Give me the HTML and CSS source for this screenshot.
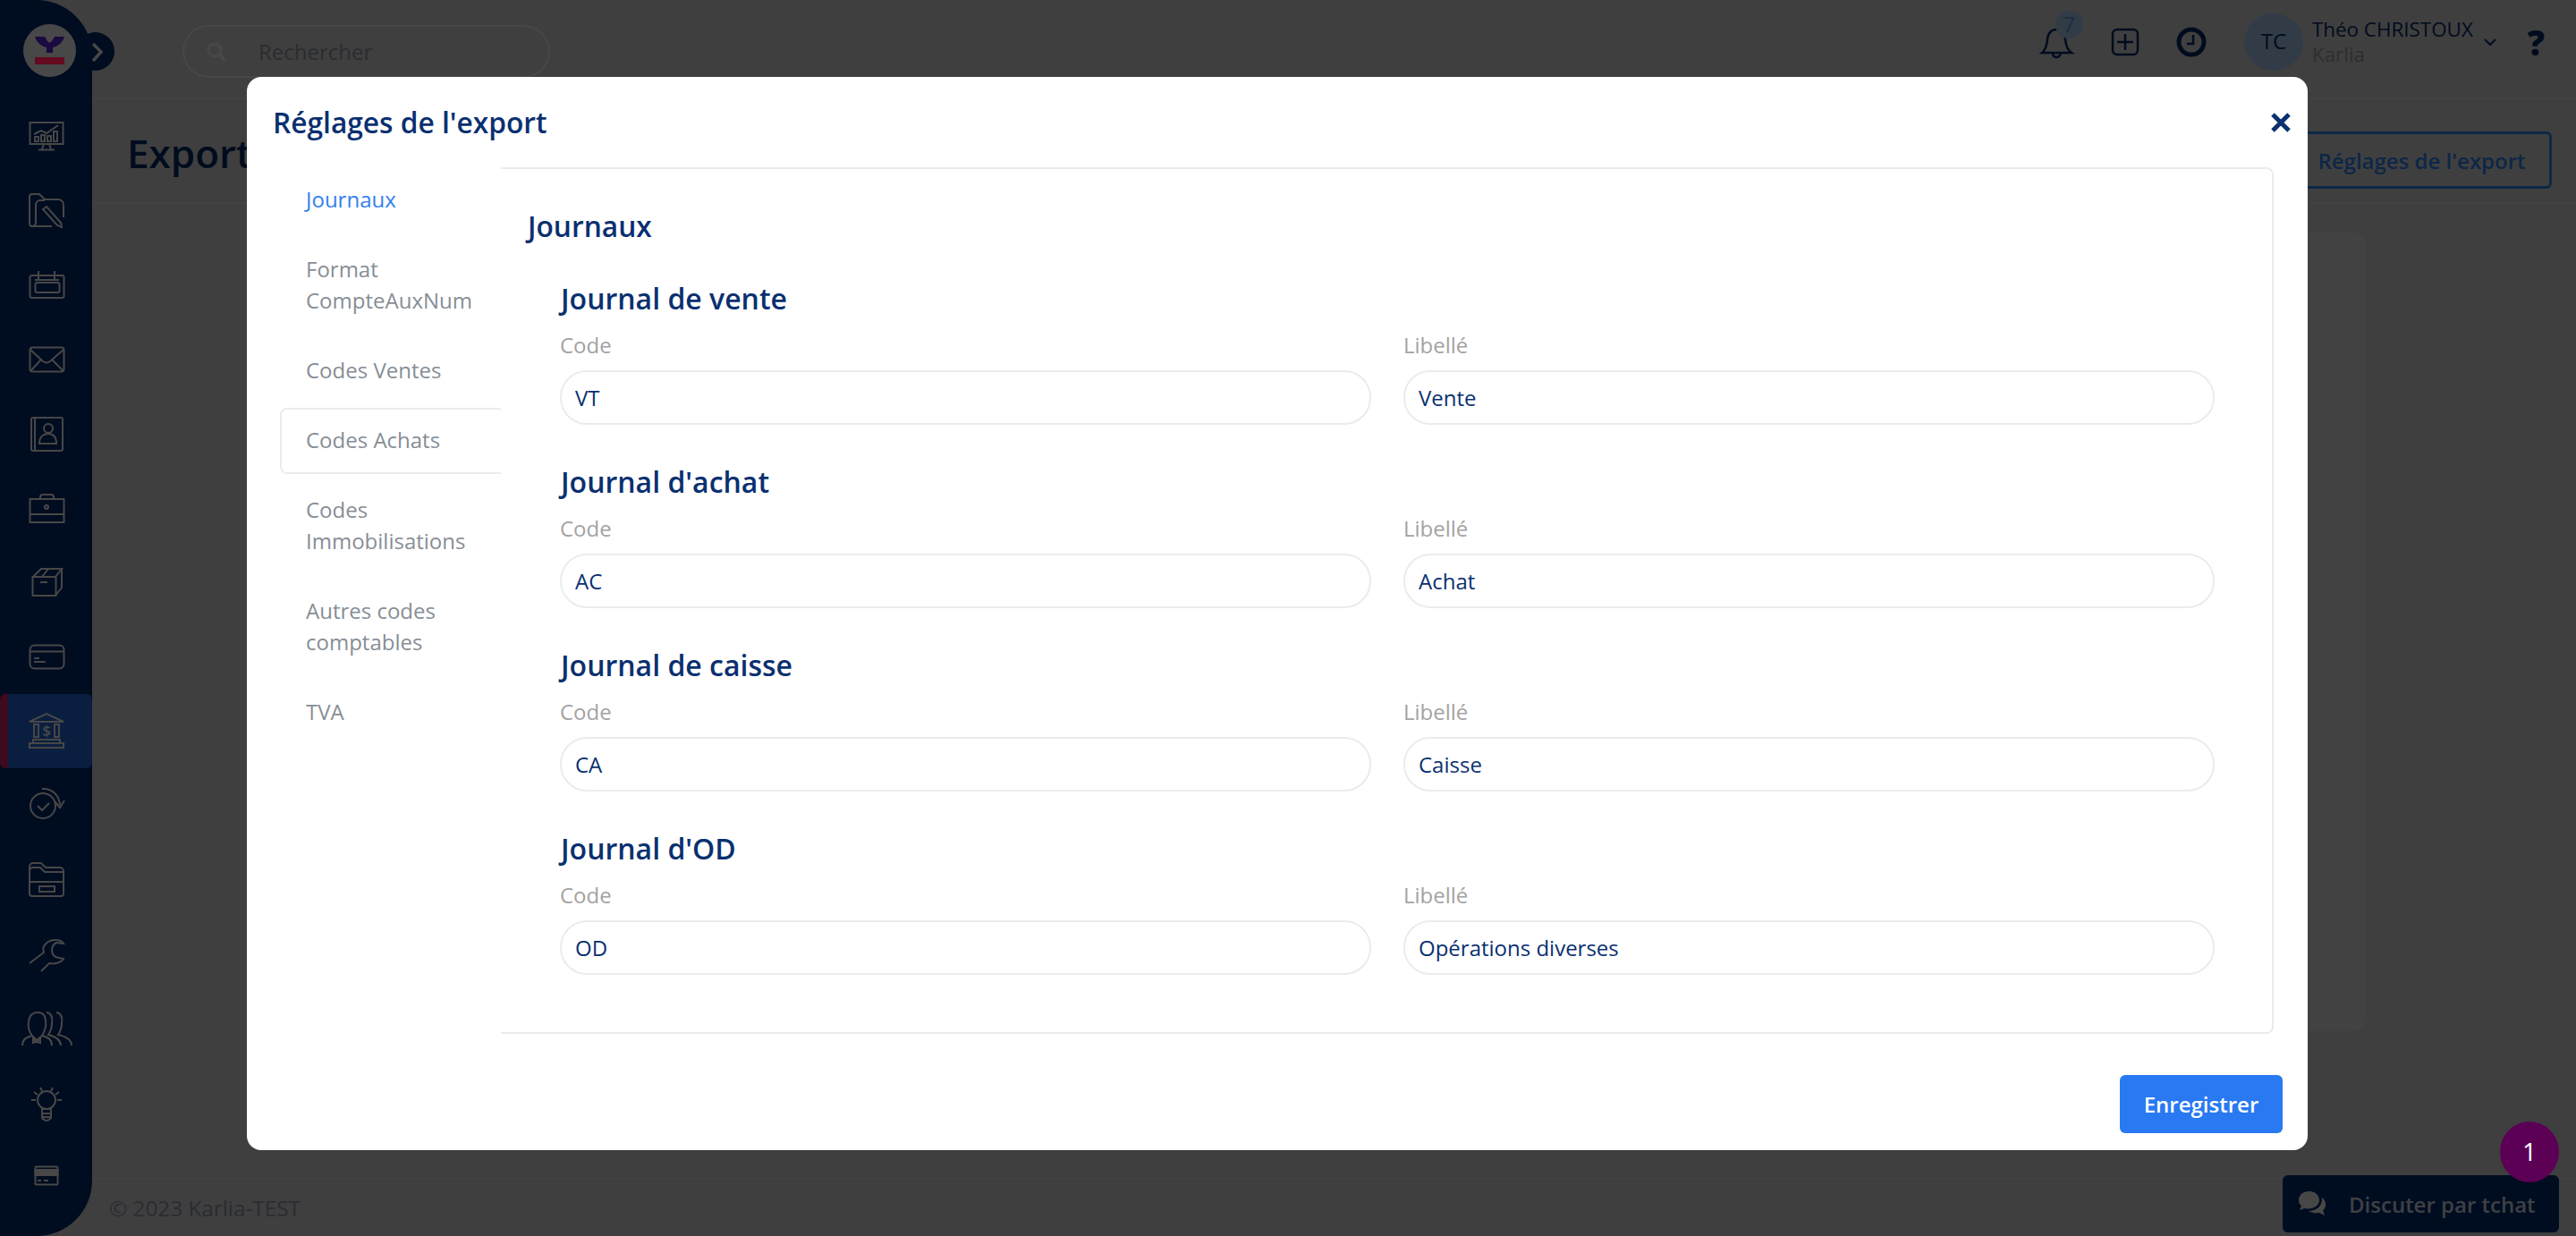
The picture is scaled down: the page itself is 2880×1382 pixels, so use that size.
FILE: index.html
```html
<!DOCTYPE html>
<html lang="fr">
<head>
    <meta charset="UTF-8">
    <meta name="viewport" content="width=device-width, initial-scale=1.0">
    <title>Exports</title>
    <link rel="stylesheet" href="styles.css">
</head>
<body>
    <div class="app">
        <!-- sidebar -->
        <aside class="sidebar">
            <div class="logo">
                <svg class="logo-mark" viewBox="0 0 59 59" width="59" height="59">
                    <circle cx="29.5" cy="29.5" r="29.5" fill="#484848"/>
                    <path d="M13 14 L24 14 C26 18 28 20 29.5 21 C31 20 33 18 35 14 L46 14 C44 21 38 25 33 26 L33 32 L26 32 L26 26 C21 25 15 21 13 14 Z" fill="#1a0a3f"/>
                    <rect x="13" y="37" width="33" height="8" fill="#64091f"/>
                </svg>
            </div>
            <button class="toggle">
                <svg viewBox="0 0 43 43" width="43" height="43"><path d="M19 13 L28 22 L19 32" fill="none" stroke="#fff" stroke-width="3.5"/></svg>
            </button>
            <ul class="menu">
                <li><svg class="ico" viewBox="0 0 60 60"><rect x="11.5" y="15" width="37" height="24"/><path d="M27 39 L25 45 M33 39 L35 45 M21 45.500 H39 M16 28 L24 24 L30 27 L43 18"/><rect x="17" y="31" width="4" height="5"/><rect x="24" y="29" width="4" height="7"/><rect x="31" y="30" width="4" height="6"/><rect x="38" y="25" width="4" height="11"/></svg></li>
                <li><svg class="ico" viewBox="0 0 60 60"><path d="M18 48 H14 a3 3 0 0 1 -3 -3 V15 a3 3 0 0 1 3 -3 H22 l6 6 H43 a6 6 0 0 1 6 6 V38 M14 48 a4 4 0 0 0 4 -4 V24 a5 5 0 0 1 5 -5 H28 M18 48 H36"/><path d="M26 29 L30 26 L46 44 L47 49 L42 47 Z"/></svg></li>
                <li><svg class="ico" viewBox="0 0 60 60"><rect x="11.500" y="20" width="38" height="25" rx="2"/><rect x="17.500" y="28" width="27" height="11" rx="2"/><path d="M21 15 V25 M39 15 V25 M17 25 H44"/></svg></li>
                <li><svg class="ico" viewBox="0 0 60 60"><rect x="11.500" y="17.500" width="38" height="27" rx="3"/><path d="M12 20 L26 33 Q30 36 34 33 L49 20 M12 44 L24 31 M49 44 L36 31"/></svg></li>
                <li><svg class="ico" viewBox="0 0 60 60"><rect x="13" y="12" width="35" height="37" rx="2"/><path d="M17 12 V49 M22 41 C22 34 26 30 32 30 C38 30 41 34 41 41 Z"/><circle cx="32" cy="24" r="5"/></svg></li>
                <li><svg class="ico" viewBox="0 0 60 60"><rect x="11.500" y="20" width="38" height="26"/><path d="M23 20 V18 Q23 15 26 15 H35 Q38 15 38 18 V20 M12 37 H49"/><circle cx="30" cy="29" r="2"/></svg></li>
                <li><svg class="ico" viewBox="0 0 60 60"><rect x="14.500" y="24" width="26" height="21"/><path d="M15 24 L24 15 H47 L40 24 M47 15 V36 L40 45 M32 15 L25 24 M23 30 H31"/></svg></li>
                <li><svg class="ico" viewBox="0 0 60 60"><rect x="11.500" y="17.500" width="38" height="26" rx="5"/><path d="M12 24.500 H49 M16 32 H22 M16 36 H29"/></svg></li>
                <li class="active"><svg class="ico" viewBox="0 0 60 60"><path d="M11 20 L30 11 L49 20 Z"/><rect x="16" y="23" width="5" height="14"/><rect x="39" y="23" width="5" height="14"/><rect x="15" y="40" width="30" height="4"/><rect x="11" y="44" width="38" height="5"/><text x="30" y="36" class="dollar">$</text></svg></li>
                <li><svg class="ico" viewBox="0 0 60 60"><circle cx="26" cy="31" r="14"/><path d="M20 31 L25 36 L33 28 M25 12 C36 11 44 19 45 30 M39 26 L45 33 L50 25"/></svg></li>
                <li><svg class="ico" viewBox="0 0 60 60"><path d="M11 24 V16 a4 4 0 0 1 4 -4 H24 l5 5 H45 a4 4 0 0 1 4 4 V46 a3 3 0 0 1 -3 3 H14 a3 3 0 0 1 -3 -3 Z M11 21 a4 4 0 0 1 4 -4 H23 l5 5 H49 M11 33 H49"/><rect x="22" y="38" width="17" height="6"/></svg></li>
                <li><svg class="ico" viewBox="0 0 60 60"><path d="M11 40 L27 28 C24 20 32 14 40 14 C44 14 47 15 49 18 L41 17 C36 19 35 26 37 30 C39 34 44 34 49 35 C46 40 38 41 33 40 L24 49"/></svg></li>
                <li><svg class="ico" viewBox="0 0 60 60"><path d="M3 49 C3 42 7 40 14 38 C10 33 9 28 10 22 C11 15 15 12 20 12 C26 12 29 15 29 22 C30 28 28 33 25 38 C32 40 36 42 36 49 M14 38 L19 43 L25 38 M15 41 L19 45 L15 46 Z M23 41 L19 45 L23 46 Z M30 12 C36 13 37 18 36 24 C36 30 34 34 32 37 C40 39 46 42 46 49 M41 12 C47 13 48 18 47 24 C47 30 45 34 43 37 C52 39 58 42 58 49"/></svg></li>
                <li><svg class="ico" viewBox="0 0 60 60"><circle cx="30" cy="27" r="10"/><path d="M25 37 H35 V47 Q30 53 25 47 Z M25 42 H35 M25 46 H35 M13 27 H18 M42 27 H47 M16 18 L20 21 M44 18 L40 21 M23 13 L25 17 M37 13 L35 17"/></svg></li>
                <li><svg class="ico" viewBox="0 0 60 60"><rect x="17.500" y="18.500" width="25" height="20" rx="1"/><rect x="17.500" y="22" width="25" height="6" class="fill"/><path d="M20 34 H24 M27 34 H32"/></svg></li>
            </ul>
        </aside>

        <div class="main">
            <header class="topbar">
                <div class="search">
                    <svg viewBox="0 0 24 24" width="24" height="24"><circle cx="10" cy="10" r="7" fill="none" stroke="#fff" stroke-width="3.500"/><path d="M15 15 L22 22" stroke="#fff" stroke-width="4"/></svg>
                    <span>Rechercher</span>
                </div>
                <div class="top-actions">
                    <div class="bell">
                        <svg class="top-ico" viewBox="0 0 40 40" width="40" height="40"><path d="M3 33 Q8 29 9 18 C10 10 14 7 19 7 C25 7 28 11 29 18 Q30 29 36 33 Z"/><path d="M15 33 Q15 38 19 38 Q23 38 24 33"/></svg>
                        <span class="bell-count">7</span>
                    </div>
                    <svg class="top-ico add" viewBox="0 0 32 32" width="32" height="32"><rect x="2" y="2" width="28" height="28" rx="5"/><path d="M16 7 V25 M7 16 H25"/></svg>
                    <svg class="top-ico clock" viewBox="0 0 34 34" width="34" height="34"><circle cx="17" cy="17" r="14"/><path d="M19 9 V19 H12"/></svg>
                    <div class="avatar">TC</div>
                    <div class="user">
                        <div class="user-name">Théo CHRISTOUX</div>
                        <div class="user-company">Karlia</div>
                    </div>
                    <svg class="caret" viewBox="0 0 14 10" width="14" height="10"><path d="M1 2 L7 8 L13 2"/></svg>
                    <span class="help">?</span>
                </div>
            </header>

            <div class="page-head">
                <h1>Exports</h1>
                <button class="btn-outline">Réglages de l'export</button>
            </div>

            <div class="content">
                <div class="card"></div>
            </div>

            <footer class="footer">© 2023 Karlia-TEST</footer>
        </div>
    </div>

    <button class="chat">
        <svg viewBox="0 0 32 30" width="32" height="30"><path d="M13 1 C6 1 1 5 1 11 C1 14 2 16 4 17 L2 22 L8 20 C15 22 24 18 24 11 C24 5 19 1 13 1 Z" fill="#fff"/><path d="M27 8 C30 10 31 13 31 16 C31 19 30 21 28 22 L30 28 L24 25 C20 26 15 25 12 23 C20 23 28 18 27 8 Z" fill="#fff"/></svg>
        <span>Discuter par tchat</span>
    </button>

    <!-- modal -->
    <div class="overlay">
        <div class="modal">
            <div class="modal-head">
                <h2>Réglages de l'export</h2>
                <svg class="close" viewBox="0 0 22 22" width="22" height="22"><path d="M2 2 L20 20 M20 2 L2 20"/></svg>
            </div>
            <div class="modal-body">
                <ul class="tabs">
                    <li class="tab current">Journaux</li>
                    <li class="tab">Format CompteAuxNum</li>
                    <li class="tab">Codes Ventes</li>
                    <li class="tab hover">Codes Achats</li>
                    <li class="tab">Codes Immobilisations</li>
                    <li class="tab">Autres codes comptables</li>
                    <li class="tab">TVA</li>
                </ul>
                <div class="panel">
                    <h3>Journaux</h3>
                    <section class="journal">
                        <h4>Journal de vente</h4>
                        <div class="fields">
                            <div><label>Code</label><input type="text" value="VT"></div>
                            <div><label>Libellé</label><input type="text" value="Vente"></div>
                        </div>
                    </section>
                    <section class="journal">
                        <h4>Journal d'achat</h4>
                        <div class="fields">
                            <div><label>Code</label><input type="text" value="AC"></div>
                            <div><label>Libellé</label><input type="text" value="Achat"></div>
                        </div>
                    </section>
                    <section class="journal">
                        <h4>Journal de caisse</h4>
                        <div class="fields">
                            <div><label>Code</label><input type="text" value="CA"></div>
                            <div><label>Libellé</label><input type="text" value="Caisse"></div>
                        </div>
                    </section>
                    <section class="journal">
                        <h4>Journal d'OD</h4>
                        <div class="fields">
                            <div><label>Code</label><input type="text" value="OD"></div>
                            <div><label>Libellé</label><input type="text" value="Opérations diverses"></div>
                        </div>
                    </section>
                </div>
            </div>
            <div class="modal-foot">
                <button class="btn-save">Enregistrer</button>
            </div>
        </div>
    </div>

    <div class="chat-badge">1</div>
</body>
</html>
```

FILE: styles.css
```css
* {box-sizing: border-box;}

html, body {
    margin: 0;
    height: 100%;
    overflow: hidden;
}

body {
    font-family: "Open Sans", "Noto Sans", sans-serif;
    font-size: 24px;
    color: #002c6c;
    background-color: #e1e1e1;
}

ul {
    list-style: none;
    margin: 0;
    padding: 0;
}

.app {
    display: flex;
    height: 1382px;
}

/* sidebar */
.sidebar {
    position: relative;
    width: 103px;
    flex-shrink: 0;
    background-color: #002b72;
    border-radius: 0 62px 62px 0;
}

.logo {
    position: absolute;
    left: 26px;
    top: 27px;
}

.logo-mark {
    display: block;
    position: relative;
    z-index: 60;
}

.toggle {
    position: absolute;
    left: 85px;
    top: 36px;
    width: 43px;
    height: 43px;
    padding: 0;
    border: none;
    border-radius: 50%;
    background-color: #002b72;
}

.toggle svg {display: block;}

.menu {padding-top: 110.4px;}

.menu li {
    display: flex;
    align-items: center;
    justify-content: center;
    height: 83.15px;
}

.menu li.active {
    background-color: #246be0;
    border-left: 9px solid #e0246a;
    border-radius: 6px;
    padding-right: 9px;
}

.ico {
    width: 60px;
    height: 60px;
    fill: none;
    stroke: #fff;
    stroke-width: 2;
}

.ico .fill {fill: #fff;}

.ico .dollar {
    font-size: 17px;
    font-weight: 600;
    text-anchor: middle;
    fill: #fff;
    stroke: none;
}

/* main part */
.main {
    flex: 1;
    display: flex;
    flex-direction: column;
    min-width: 0;
}

.topbar {
    display: flex;
    align-items: flex-start;
    height: 111px;
    padding-left: 101px;
    border-bottom: 2px solid #ebebeb;
}

.search {
    display: flex;
    align-items: center;
    gap: 35px;
    width: 411px;
    height: 59px;
    margin-top: 28px;
    padding-left: 24px;
    border: 2px solid #fff;
    border-radius: 30px;
    color: #98a2ad;
}

.top-actions {
    display: flex;
    align-items: center;
    height: 64px;
    margin-top: 15px;
    margin-left: auto;
    padding-right: 35px;
    color: #002c6c;
}

.bell {
    position: relative;
    width: 40px;
    height: 40px;
    margin-bottom: 2px;
}

.top-ico {
    fill: none;
    stroke: #002c6c;
    stroke-width: 2.500;
}

.bell-count {
    position: absolute;
    left: 18px;
    top: -14px;
    width: 31px;
    height: 31px;
    border-radius: 50%;
    background-color: #b2d6ff;
    color: #6f9cf0;
    text-align: center;
    line-height: 30px;
}

.add {margin-left: 40px;}

.clock {
    margin-left: 41px;
    stroke-width: 5;
}

.clock path {stroke-width: 2.500;}

.avatar {
    width: 66px;
    height: 64px;
    margin-left: 42px;
    border-radius: 50%;
    background-color: #b2d6ff;
    text-align: center;
    line-height: 62px;
}

.user {
    margin-left: 10px;
    font-size: 22.4px;
    line-height: 28px;
}

.user-company {color: #a4a4a4;}

.caret {
    margin-left: 12px;
    fill: none;
    stroke: #002c6c;
    stroke-width: 2;
}

.help {
    margin-left: 35px;
    font-size: 38px;
    font-weight: 800;
    line-height: 40px;
}

.page-head {
    display: flex;
    align-items: center;
    justify-content: space-between;
    height: 117px;
    padding: 0 27px 0 39px;
    border-bottom: 2px solid #ebebeb;
}

h1 {
    margin: 4px 0 0;
    font-size: 44px;
    font-weight: 600;
}

.btn-outline {
    width: 291px;
    height: 64px;
    margin-top: 21px;
    padding: 0;
    border: 3px solid #2f8bff;
    border-radius: 6px;
    background: transparent;
    color: #2f8bff;
    font-family: inherit;
    font-size: 24px;
    font-weight: 600;
}

.content {
    flex: 1;
    padding: 32px 236px 0 300px;
}

.card {
    height: 893px;
    border-radius: 12px;
    background-color: #ebebeb;
}

.footer {
    height: 65px;
    padding: 15px 19px 0;
    border-top: 2px solid #ebebeb;
    color: #96a0b6;
    font-size: 24.3px;
}

/* chat */
.chat {
    position: fixed;
    left: 2552px;
    top: 1314px;
    display: flex;
    align-items: center;
    gap: 25px;
    width: 309px;
    height: 64px;
    padding: 0 0 0 17px;
    border: none;
    border-radius: 6px;
    background-color: #002b72;
    color: #dbe4f5;
    font-family: inherit;
    font-size: 24px;
    font-weight: 600;
}

.chat-badge {
    position: fixed;
    left: 2795px;
    top: 1254px;
    z-index: 60;
    width: 66px;
    height: 68px;
    border-radius: 50%;
    background-color: #5b0055;
    color: #fff;
    font-size: 28px;
    text-align: center;
    line-height: 66px;
}

/* modal */
.overlay {
    position: fixed;
    left: 0;
    top: 0;
    z-index: 50;
    width: 100%;
    height: 100%;
    padding: 86px 0 0 276px;
    background-color: rgba(0, 0, 0, 0.72);
}

.modal {
    width: 2304px;
    height: 1200px;
    padding: 0 38px 0 37px;
    border-radius: 16px;
    background-color: #fff;
}

.modal-head {
    display: flex;
    align-items: center;
    justify-content: space-between;
    height: 101px;
}

h2 {
    margin: 0 0 0 -8px;
    font-size: 31.7px;
    font-weight: 600;
    color: #0a3070;
}

.close {
    margin-right: -19px;
    fill: none;
    stroke: #0a3070;
    stroke-width: 5;
}

.modal-body {display: flex;}

.tabs {
    width: 247px;
    flex-shrink: 0;
}

.tab {
    margin-bottom: 4px;
    padding: 16px 20px 19px 27px;
    border: 2px solid transparent;
    border-right: none;
    border-radius: 8px 0 0 8px;
    color: #868e96;
    line-height: 35px;
}

.tab.current {color: #3480ee;}

.tab.hover {border-color: #e9ecef;}

.panel {
    flex: 1;
    padding: 42px 64px 64px 30px;
    border: 2px solid #e9ecef;
    border-left: none;
    border-radius: 0 8px 8px 0;
}

h3 {
    margin: 0 0 37px;
    font-size: 31.7px;
    font-weight: 600;
    line-height: 44px;
    color: #0a3070;
}

.journal {
    margin-bottom: 42px;
    padding-left: 36px;
}

.journal:last-child {margin-bottom: 0;}

h4 {
    margin: 0 0 12px 1px;
    font-size: 32px;
    font-weight: 600;
    line-height: 44px;
    color: #0a3070;
}

.fields {
    display: grid;
    grid-template-columns: 1fr 1fr;
    gap: 36px;
}

.fields label {
    display: block;
    margin-bottom: 10px;
    color: #a3a3a3;
    line-height: 36px;
}

.fields input {
    display: block;
    width: 100%;
    height: 61px;
    padding: 0 15px;
    border: 2px solid #e9ecef;
    border-radius: 30px;
    outline: none;
    color: #0a3070;
    font-family: inherit;
    font-size: 24px;
}

.modal-foot {
    display: flex;
    justify-content: flex-end;
    margin-top: 46px;
    margin-right: -10px;
}

.btn-save {
    width: 182px;
    height: 65px;
    border: none;
    border-radius: 6px;
    background-color: #2979f2;
    color: #fff;
    font-family: inherit;
    font-size: 24px;
    font-weight: 600;
}
```
